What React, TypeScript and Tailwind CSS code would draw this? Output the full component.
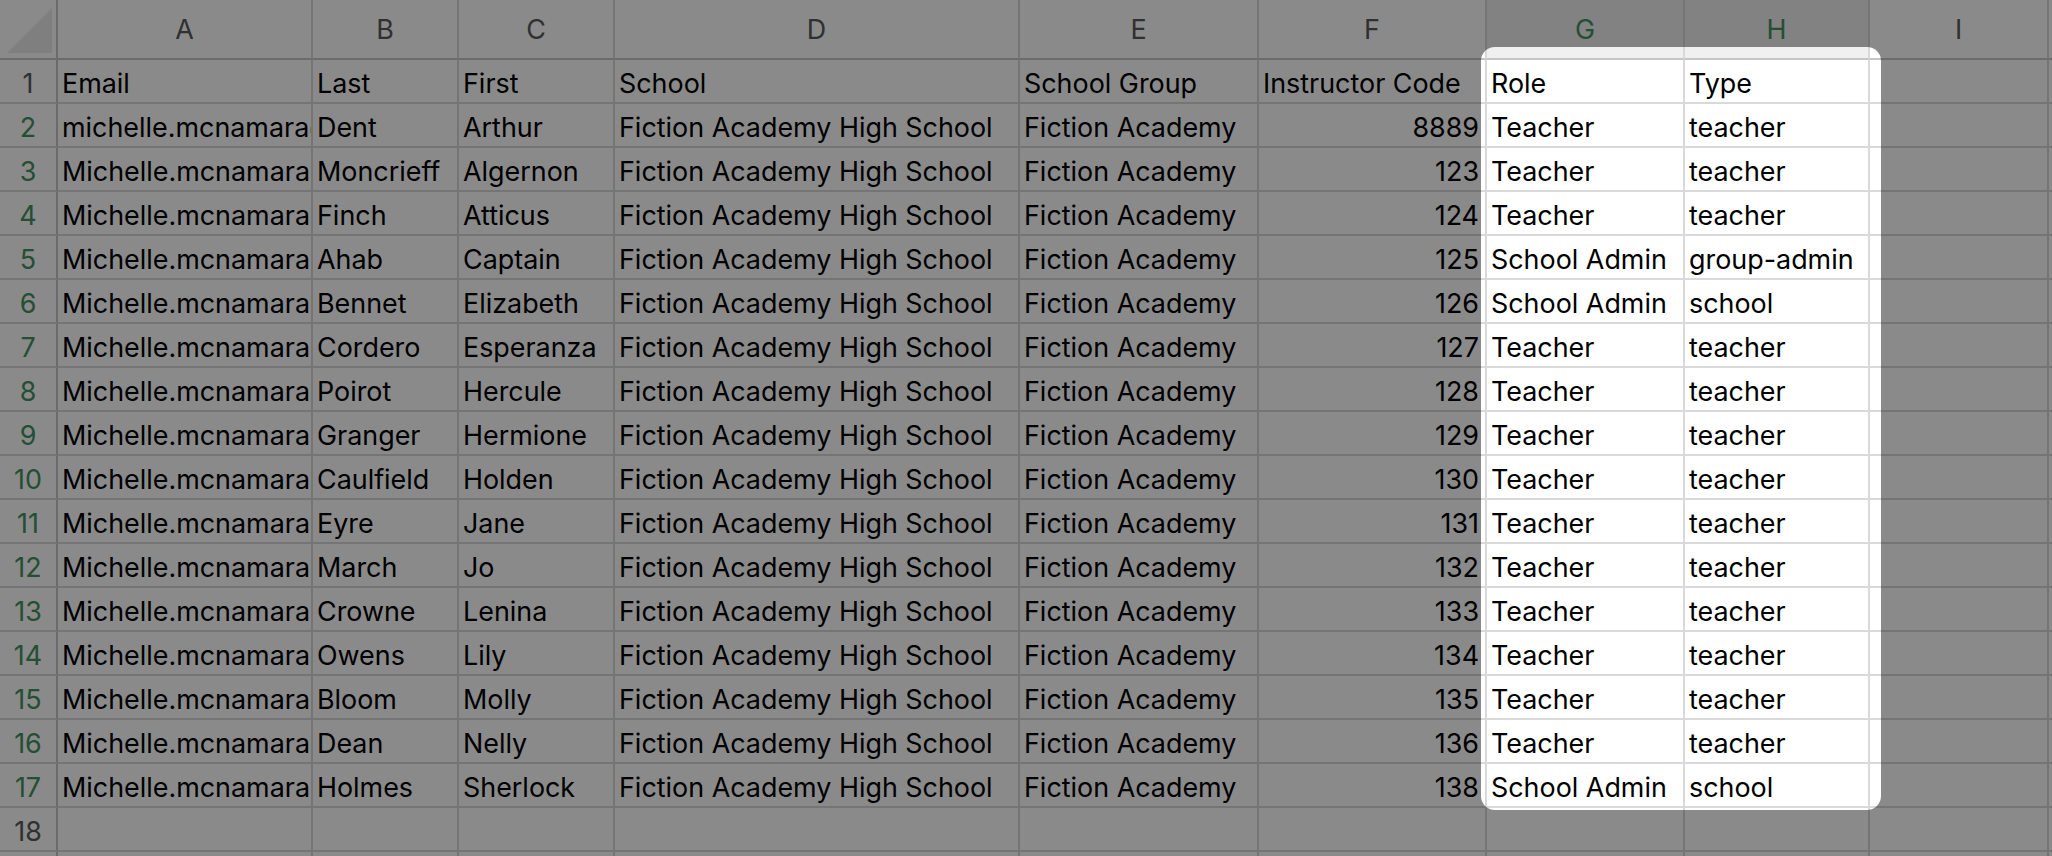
import React from "react";

const rows: string[][] = [
  ["Email", "Last", "First", "School", "School Group", "Instructor Code", "Role", "Type"],
  ["michelle.mcnamara@fictionacademy.org", "Dent", "Arthur", "Fiction Academy High School", "Fiction Academy", "8889", "Teacher", "teacher"],
  ["Michelle.mcnamara@fictionacademy.org", "Moncrieff", "Algernon", "Fiction Academy High School", "Fiction Academy", "123", "Teacher", "teacher"],
  ["Michelle.mcnamara@fictionacademy.org", "Finch", "Atticus", "Fiction Academy High School", "Fiction Academy", "124", "Teacher", "teacher"],
  ["Michelle.mcnamara@fictionacademy.org", "Ahab", "Captain", "Fiction Academy High School", "Fiction Academy", "125", "School Admin", "group-admin"],
  ["Michelle.mcnamara@fictionacademy.org", "Bennet", "Elizabeth", "Fiction Academy High School", "Fiction Academy", "126", "School Admin", "school"],
  ["Michelle.mcnamara@fictionacademy.org", "Cordero", "Esperanza", "Fiction Academy High School", "Fiction Academy", "127", "Teacher", "teacher"],
  ["Michelle.mcnamara@fictionacademy.org", "Poirot", "Hercule", "Fiction Academy High School", "Fiction Academy", "128", "Teacher", "teacher"],
  ["Michelle.mcnamara@fictionacademy.org", "Granger", "Hermione", "Fiction Academy High School", "Fiction Academy", "129", "Teacher", "teacher"],
  ["Michelle.mcnamara@fictionacademy.org", "Caulfield", "Holden", "Fiction Academy High School", "Fiction Academy", "130", "Teacher", "teacher"],
  ["Michelle.mcnamara@fictionacademy.org", "Eyre", "Jane", "Fiction Academy High School", "Fiction Academy", "131", "Teacher", "teacher"],
  ["Michelle.mcnamara@fictionacademy.org", "March", "Jo", "Fiction Academy High School", "Fiction Academy", "132", "Teacher", "teacher"],
  ["Michelle.mcnamara@fictionacademy.org", "Crowne", "Lenina", "Fiction Academy High School", "Fiction Academy", "133", "Teacher", "teacher"],
  ["Michelle.mcnamara@fictionacademy.org", "Owens", "Lily", "Fiction Academy High School", "Fiction Academy", "134", "Teacher", "teacher"],
  ["Michelle.mcnamara@fictionacademy.org", "Bloom", "Molly", "Fiction Academy High School", "Fiction Academy", "135", "Teacher", "teacher"],
  ["Michelle.mcnamara@fictionacademy.org", "Dean", "Nelly", "Fiction Academy High School", "Fiction Academy", "136", "Teacher", "teacher"],
  ["Michelle.mcnamara@fictionacademy.org", "Holmes", "Sherlock", "Fiction Academy High School", "Fiction Academy", "138", "School Admin", "school"],
  ["", "", "", "", "", "", "", ""],
  ["", "", "", "", "", "", "", ""],
];

const letters = ["A", "B", "C", "D", "E", "F", "G", "H", "I", ""];

function CornerCell() {
  return (
    <div className="h-[60px] border-r-2 border-b-2 border-r-[#c6c6c6] border-b-[#c6c6c6] bg-white relative">
      <svg className="absolute left-0 top-0" width="56" height="58" viewBox="0 0 56 58">
        <polygon points="52,8 52,53 7,53" fill="#ebebeb" />
      </svg>
    </div>
  );
}

function HeaderCell({ label, selected }: { label: string; selected: boolean }) {
  return (
    <div
      className={
        selected
          ? "h-[60px] border-r-2 border-b-2 border-r-[#d9d9d9] border-b-[#c6c6c6] bg-[#f0f0f0] text-center pt-[15px] leading-[28px] text-[#43925f]"
          : "h-[60px] border-r-2 border-b-2 border-r-[#d9d9d9] border-b-[#c6c6c6] bg-white text-center pt-[15px] leading-[28px] text-[#5a5a5a]"
      }
    >
      {label}
    </div>
  );
}

function RowNumber({ n }: { n: number }) {
  const selected = n >= 2 && n <= 17;
  return (
    <div
      className={
        selected
          ? "h-[44px] border-r-2 border-b-2 border-r-[#c6c6c6] border-b-[#d9d9d9] bg-white text-center pt-[9px] leading-[28px] text-[#43925f]"
          : "h-[44px] border-r-2 border-b-2 border-r-[#c6c6c6] border-b-[#d9d9d9] bg-white text-center pt-[9px] leading-[28px] text-[#5a5a5a]"
      }
    >
      {n}
    </div>
  );
}

function DataCell({ value, right }: { value: string; right: boolean }) {
  return (
    <div
      className={
        right
          ? "h-[44px] border-r-2 border-b-2 border-[#d9d9d9] bg-white overflow-hidden whitespace-nowrap text-right pr-[6px] pl-[4px] pt-[9px] leading-[28px] text-black"
          : "h-[44px] border-r-2 border-b-2 border-[#d9d9d9] bg-white overflow-hidden whitespace-nowrap text-left pl-[4px] pt-[9px] leading-[28px] text-black"
      }
    >
      {value}
    </div>
  );
}

export default function App() {
  return (
    <div className="relative w-[2052px] h-[856px] overflow-hidden bg-white font-[family-name:Inter,sans-serif] text-[26.9px]">
      <div className="grid grid-cols-[58px_255px_146px_156px_405px_239px_228px_198px_185px_179px_1fr]">
        <CornerCell />
        {letters.map((l, i) => (
          <HeaderCell key={i} label={l} selected={l === "G" || l === "H"} />
        ))}
        {rows.map((r, ri) => (
          <React.Fragment key={ri}>
            <RowNumber n={ri + 1} />
            {r.map((v, ci) => (
              <DataCell key={ci} value={v} right={ci === 5 && ri > 0} />
            ))}
            <DataCell value="" right={false} />
            <DataCell value="" right={false} />
          </React.Fragment>
        ))}
      </div>
      <div className="pointer-events-none absolute left-[1481px] top-[47px] h-[763px] w-[400px] rounded-[14px] shadow-[0_0_0_3000px_rgba(0,0,0,0.46)]" />
    </div>
  );
}
